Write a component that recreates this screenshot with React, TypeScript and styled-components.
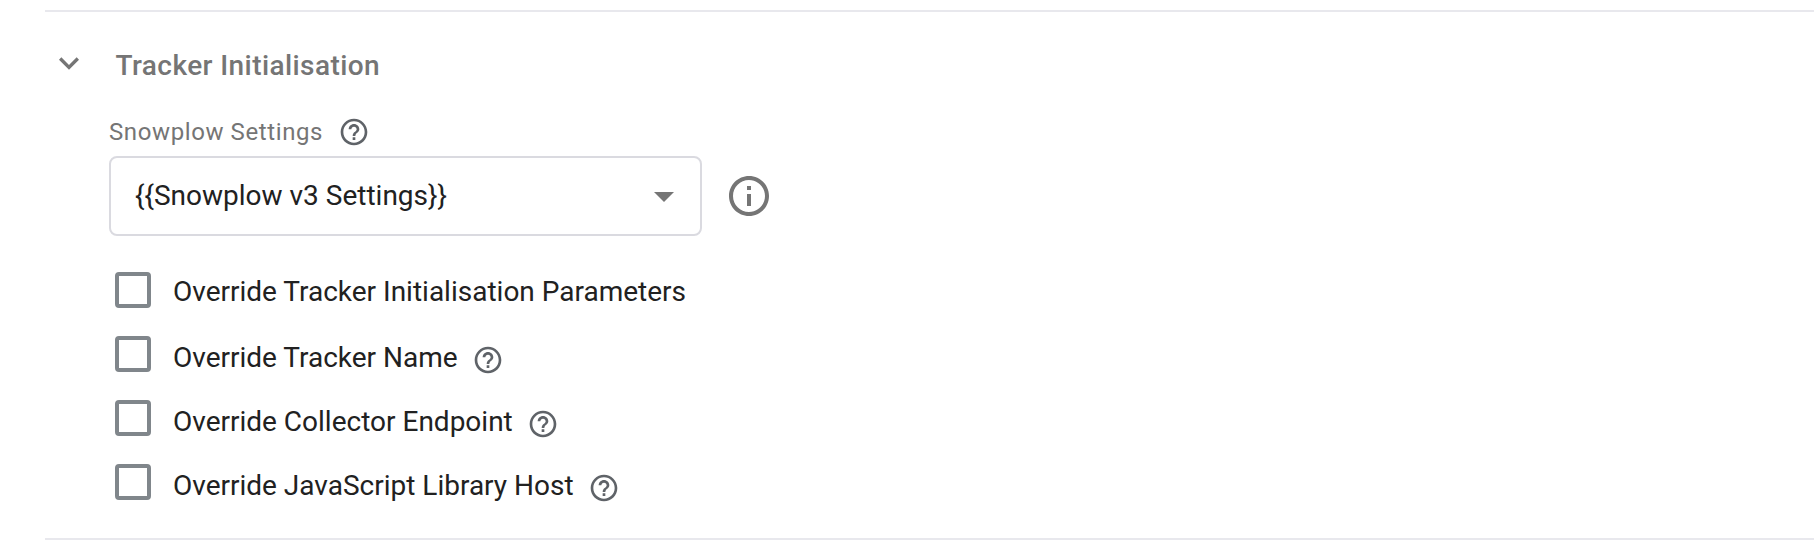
import React from 'react';
import styled, { createGlobalStyle } from 'styled-components';

const GlobalStyle = createGlobalStyle`
  *, *::before, *::after { box-sizing: border-box; }
  body {
    margin: 0;
    background: #fff;
    color: #212121;
    font-family: Roboto, "Liberation Sans", sans-serif;
    font-size: 28px;
    overflow: hidden;
  }
`;

const Section = styled.section`
  height: 530px;
  margin: 10px 0 0 45px;
  border-top: 2px solid #e8e8ed;
  border-bottom: 2px solid #e8e8ed;
`;

const Header = styled.header`
  display: flex;
  align-items: flex-start;
  height: 102px;
  padding: 31px 0 0 4px;
`;

const Chevron = styled.svg`
  flex: none;
  width: 40px;
  height: 40px;
  fill: #757575;
`;

const Title = styled.h2`
  margin: 5px 0 0 26.5px;
  color: #757575;
  font-size: 28px;
  font-weight: 500;
  line-height: 36px;
  letter-spacing: 0.42px;
  white-space: nowrap;
`;

const Body = styled.div`
  padding-left: 64px;
`;

const FieldLabel = styled.div`
  display: flex;
  align-items: center;
  height: 36px;
  margin-bottom: 6px;
  color: #757575;
  font-size: 24px;
  line-height: 36px;
  letter-spacing: 0.6px;
  white-space: nowrap;
`;

const HelpSvg = styled.svg`
  flex: none;
  width: 32px;
  height: 32px;
  margin-left: 15px;
  fill: #5f6368;
`;

const SelectRow = styled.div`
  display: flex;
  align-items: center;
`;

const Select = styled.div`
  display: flex;
  align-items: center;
  justify-content: space-between;
  width: 593px;
  height: 80px;
  padding: 0 26px 0 24px;
  border: 2px solid #dadae0;
  border-radius: 8px;
  line-height: 36px;
  white-space: nowrap;
`;

const Arrow = styled.svg`
  width: 20px;
  height: 10px;
  margin-top: 2px;
  fill: #757575;
`;

const InfoSvg = styled.svg`
  width: 48px;
  height: 48px;
  margin-left: 23px;
  fill: #757575;
`;

const Options = styled.div`
  display: grid;
  grid-auto-rows: 64px;
  padding: 36px 0 0 6px;
`;

const Option = styled.label<{ $drop: number }>`
  display: flex;
  align-items: flex-start;
  line-height: 36px;
  white-space: nowrap;

  > span {
    margin: ${(p) => p.$drop}px 0 0 22px;
  }
  > svg {
    margin: 8px 0 0 14.5px;
  }
`;

const Checkbox = styled.input`
  appearance: none;
  flex: none;
  width: 36px;
  height: 36px;
  margin: 0;
  border: 4px solid #80868b;
  border-radius: 4px;
`;

const HelpIcon = () => (
  <HelpSvg viewBox="0 0 24 24" aria-hidden="true">
    <path d="M11 18h2v-2h-2v2zm1-16C6.48 2 2 6.48 2 12s4.48 10 10 10 10-4.48 10-10S17.52 2 12 2zm0 18c-4.41 0-8-3.59-8-8s3.59-8 8-8 8 3.59 8 8-3.59 8-8 8zm0-14c-2.21 0-4 1.79-4 4h2c0-1.1.9-2 2-2s2 .9 2 2c0 2-3 1.75-3 5h2c0-2.25 3-2.5 3-5 0-2.21-1.79-4-4-4z" />
  </HelpSvg>
);

const options = [
  { label: 'Override Tracker Initialisation Parameters', help: false, drop: 2 },
  { label: 'Override Tracker Name', help: true, drop: 4 },
  { label: 'Override Collector Endpoint', help: true, drop: 4 },
  { label: 'Override JavaScript Library Host', help: true, drop: 4 },
];

export default function App() {
  return (
    <>
      <GlobalStyle />
      <Section>
        <Header>
          <Chevron viewBox="0 0 24 24" aria-hidden="true">
            <path d="M7.41 8.59 12 13.17l4.59-4.58L18 10l-6 6-6-6z" />
          </Chevron>
          <Title>Tracker Initialisation</Title>
        </Header>
        <Body>
          <FieldLabel>
            Snowplow Settings
            <HelpIcon />
          </FieldLabel>
          <SelectRow>
            <Select>
              {'{{Snowplow v3 Settings}}'}
              <Arrow viewBox="0 0 20 10" aria-hidden="true">
                <path d="M0 0h20L10 10z" />
              </Arrow>
            </Select>
            <InfoSvg viewBox="0 0 24 24" aria-hidden="true">
              <path d="M11 7h2v2h-2zm0 4h2v6h-2zm1-9C6.48 2 2 6.48 2 12s4.48 10 10 10 10-4.48 10-10S17.52 2 12 2zm0 18c-4.41 0-8-3.59-8-8s3.59-8 8-8 8 3.59 8 8-3.59 8-8 8z" />
            </InfoSvg>
          </SelectRow>
          <Options>
            {options.map((o) => (
              <Option key={o.label} $drop={o.drop}>
                <Checkbox type="checkbox" />
                <span>{o.label}</span>
                {o.help && <HelpIcon />}
              </Option>
            ))}
          </Options>
        </Body>
      </Section>
    </>
  );
}
